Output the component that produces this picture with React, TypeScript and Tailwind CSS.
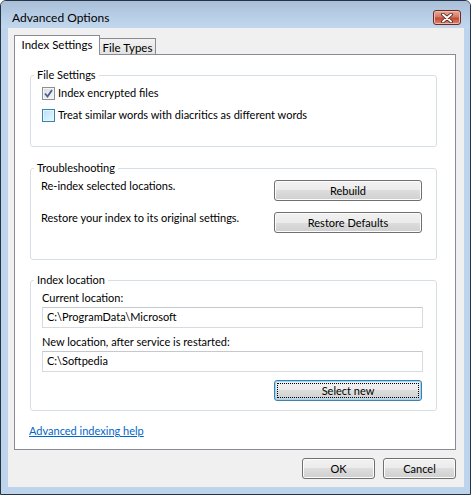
import React from "react";

const font = { fontFamily: 'Lato, "Noto Sans", sans-serif' };

function WinButton({ label, focused, className = "" }: { label: string; focused?: boolean; className?: string }) {
  return (
    <button
      type="button"
      className={
        "relative h-[21px] rounded-[3px] border text-[11px] leading-none text-black " +
        "bg-[linear-gradient(to_bottom,#f2f2f2_0%,#ebebeb_50%,#dddddd_50%,#cfcfcf_100%)] " +
        (focused
          ? "border-[#3c7fb1] shadow-[inset_0_0_0_1px_#97d8f8] "
          : "border-[#707070] shadow-[inset_0_0_0_1px_#fcfcfc] ") +
        className
      }
    >
      {focused && <span className="pointer-events-none absolute inset-[2px] border border-dotted border-black" />}
      <span className="relative">{label}</span>
    </button>
  );
}

function Checkbox({ checked, hot }: { checked?: boolean; hot?: boolean }) {
  return (
    <span
      className={
        "flex h-[13px] w-[13px] shrink-0 items-center justify-center border " +
        (hot
          ? "border-[#3c7fb1] bg-[linear-gradient(135deg,#b9dffb,#e9f7fe)] shadow-[inset_0_0_0_1px_#def9fa]"
          : "border-[#8e8f8f] bg-[linear-gradient(135deg,#dcdcdc,#f6f6f6)] shadow-[inset_0_0_0_1px_#f4f4f4]")
      }
    >
      {checked && (
        <svg width="9" height="9" viewBox="0 0 9 9">
          <path d="M1 4.5 L3.5 7.5 L8 1" fill="none" stroke="#4a5f97" strokeWidth="1.8" />
        </svg>
      )}
    </span>
  );
}

function Group({ title, children, className = "" }: { title: string; children: React.ReactNode; className?: string }) {
  return (
    <fieldset className={"ml-[15px] w-[407px] rounded-[3px] border border-[#d5dfe5] " + className}>
      <legend className="ml-[3px] px-[3px] text-[11px] leading-[16px]">{title}</legend>
      {children}
    </fieldset>
  );
}

function TextBox({ value }: { value: string }) {
  return (
    <div className="flex h-[21px] w-[381px] items-center border border-[#d7dbe0] border-t-[#c5c9cf] bg-white px-[4px] text-[11px]">
      {value}
    </div>
  );
}

export default function App() {
  return (
    <div
      style={font}
      className="flex h-[495px] w-[471px] flex-col overflow-hidden rounded-t-[6px] border border-[#253445] bg-[#bdd4ec] text-black"
    >
      {/* title bar */}
      <div className="flex h-[27px] shrink-0 items-center justify-between bg-[linear-gradient(to_bottom,#a9bfd8,#b9cfe7_60%,#c1d7ee)] pl-[11px] pr-[9px] pt-[6px]">
        <span className="text-[12px]">Advanced Options</span>
        <span className="flex h-[15px] w-[28px] items-center justify-center rounded-[3px] border border-[#6e2a20] bg-[linear-gradient(to_bottom,#e8a99b_0%,#d37967_45%,#c04a35_55%,#d88a74_100%)] shadow-[inset_0_0_0_1px_#efb9ac]">
          <svg width="14" height="10" viewBox="0 0 14 10">
            <path d="M3 1.5 L11 8.5 M11 1.5 L3 8.5" stroke="#4a1a12" strokeWidth="3.6" strokeLinecap="round" />
            <path d="M3 1.5 L11 8.5 M11 1.5 L3 8.5" stroke="#ffffff" strokeWidth="2" strokeLinecap="round" />
          </svg>
        </span>
      </div>

      {/* client */}
      <div className="flex flex-1 pb-[7px] pl-[7px] pr-[6px]">
        <div className="flex flex-1 flex-col bg-[#f0f0f0] pl-[6px] pr-[8px] pt-[7px]">
          {/* tabs */}
          <div className="flex h-[19px] items-end text-[11.5px]">
            <div className="relative z-10 -mb-px flex h-[20px] w-[86px] items-center justify-center border border-b-0 border-[#898c95] bg-white pb-[1px]">
              Index Settings
            </div>
            <div className="-ml-px flex h-[16px] w-[57px] items-center justify-center border border-b-0 border-[#898c95] bg-[linear-gradient(to_bottom,#f2f2f2,#e3e3e3)] pt-[2px]">
              File Types
            </div>
          </div>

          {/* panel */}
          <div className="flex h-[396px] w-[442px] flex-col whitespace-nowrap border border-[#898c95] bg-white text-[11px]">
            <Group title="File Settings" className="mt-[12px]">
              <div className="flex flex-col gap-[6px] pb-[23px] pl-[11px] pt-[2px]">
                <label className="flex h-[16px] items-center gap-[3px]">
                  <Checkbox checked />
                  <span>Index encrypted files</span>
                </label>
                <label className="flex h-[16px] items-center gap-[3px]">
                  <Checkbox hot />
                  <span>Treat similar words with diacritics as different words</span>
                </label>
              </div>
            </Group>

            <Group title="Troubleshooting" className="mt-[13px]">
              <div className="flex flex-col gap-[9px] pb-[26px] pl-[10px] pr-[14px] pt-[2px]">
                <div className="flex items-start justify-between">
                  <span className="leading-[16px]">Re-index selected locations.</span>
                  <WinButton label="Rebuild" className="mt-[2px] w-[148px]" />
                </div>
                <div className="flex items-start justify-between">
                  <span className="leading-[16px]">Restore your index to its original settings.</span>
                  <WinButton label="Restore Defaults" className="mt-[2px] w-[148px]" />
                </div>
              </div>
            </Group>

            <Group title="Index location" className="mt-[12px]">
              <div className="flex flex-col pb-[9px] pl-[11px] pr-[13px] pt-[2px]">
                <span className="leading-[16px]">Current location:</span>
                <div className="mt-[1px]">
                  <TextBox value="C:\ProgramData\Microsoft" />
                </div>
                <span className="mt-[6px] leading-[16px]">New location, after service is restarted:</span>
                <div className="mt-[1px]">
                  <TextBox value="C:\Softpedia" />
                </div>
                <WinButton label="Select new" focused className="mr-[1px] mt-[8px] w-[148px] self-end" />
              </div>
            </Group>

            <a href="#" className="ml-[14px] mt-[12px] self-start leading-[16px] text-[#0066cc] underline">
              Advanced indexing help
            </a>
          </div>

          {/* footer */}
          <div className="mt-[8px] flex justify-end gap-[8px]">
            <WinButton label="OK" className="w-[73px]" />
            <WinButton label="Cancel" className="w-[73px]" />
          </div>
        </div>
      </div>
    </div>
  );
}
